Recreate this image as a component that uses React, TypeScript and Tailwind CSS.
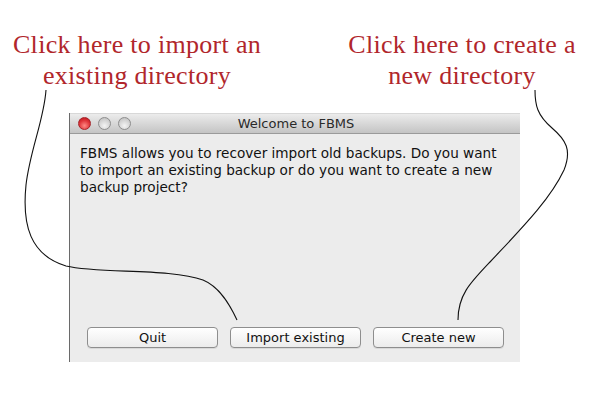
import React from "react";

export default function App() {
  const serif = { fontFamily: '"Liberation Serif", "DejaVu Serif", serif' };
  const sans = { fontFamily: '"DejaVu Sans", "Liberation Sans", sans-serif' };
  return (
    <div className="relative w-[600px] h-[400px] bg-white overflow-hidden">
      <div className="flex pt-[29px] text-[26px] leading-[31px] tracking-[0.3px] text-[#b1262b] whitespace-nowrap" style={serif}>
        <div className="w-[274px] shrink-0 text-center">
          <div>Click here to import an</div>
          <div>existing directory</div>
        </div>
        <div className="w-[48px] shrink-0" />
        <div className="w-[280px] shrink-0 text-center">
          <div>Click here to create a</div>
          <div>new directory</div>
        </div>
      </div>
      <div className="ml-[69px] mt-[22px] w-[451px] h-[249px] flex flex-col border-l border-[#6a6a6a] bg-[#ececec]" style={sans}>
        <div className="relative h-[21px] flex items-center justify-center bg-gradient-to-b from-[#ececec] to-[#c4c4c4] border-b border-[#9a9a9a] border-t border-t-[#d8d8d8]">
          <div className="absolute left-[8px] top-[3px] flex gap-[7px]">
            <span className="w-[13px] h-[13px] rounded-full border border-[#a5242a] bg-[radial-gradient(circle_at_50%_70%,#ff8a85,#e0353a_55%,#b3121a)]" />
            <span className="w-[13px] h-[13px] rounded-full border border-[#8d8d8d] bg-[radial-gradient(circle_at_50%_70%,#f4f4f4,#d2d2d2_60%,#b8b8b8)]" />
            <span className="w-[13px] h-[13px] rounded-full border border-[#8d8d8d] bg-[radial-gradient(circle_at_50%_70%,#f4f4f4,#d2d2d2_60%,#b8b8b8)]" />
          </div>
          <span className="text-[13px] text-[#2a2a2a] pl-[2px]">Welcome to FBMS</span>
        </div>
        <div className="px-[10px] pt-[11px] text-[13.6px] leading-[17px] text-[#111]">
          FBMS allows you to recover import old backups. Do you want to import an existing backup or do you want to create a new backup project?
        </div>
        <div className="flex-1" />
        <div className="flex gap-[12px] pl-[17px] pb-[14px]">
          {["Quit", "Import existing", "Create new"].map((t) => (
            <button
              key={t}
              className="w-[131px] h-[21px] rounded-[4px] border border-[#8e8e8e] bg-gradient-to-b from-[#ffffff] to-[#ececec] text-[13px] leading-[19px] text-[#111] shadow-[0_1px_0_rgba(0,0,0,0.08)]"
              style={sans}
            >
              {t}
            </button>
          ))}
        </div>
      </div>
      <svg className="absolute left-0 top-0 pointer-events-none" width="600" height="400" fill="none" stroke="#111" strokeWidth="1.1">
        <path d="M46 90 C44 120 30 150 26 185 C22 225 30 255 66 266 C100 274 170 268 203 280 C220 287 230 305 237 320" />
        <path d="M535 90 C535 105 537 115 552 128 C566 140 572 150 564 170 C550 200 520 230 490 262 C470 283 458 295 458 320" />
      </svg>
    </div>
  );
}
